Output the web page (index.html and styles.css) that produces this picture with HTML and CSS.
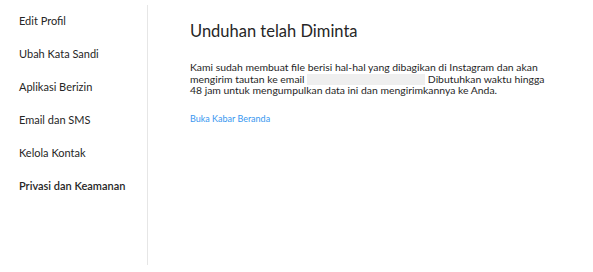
FILE: index.html
```html
<!DOCTYPE html>
<html lang="id">
<head>
    <meta charset="UTF-8">
    <meta name="viewport" content="width=device-width, initial-scale=1.0">
    <title>Privasi dan Keamanan</title>
    <link rel="stylesheet" href="styles.css">
</head>
<body>
    <div class="page">
        <ul class="side-nav">
            <li><a href="#">Edit Profil</a></li>
            <li><a href="#">Ubah Kata Sandi</a></li>
            <li><a href="#">Aplikasi Berizin</a></li>
            <li><a href="#">Email dan SMS</a></li>
            <li><a href="#">Kelola Kontak</a></li>
            <li><a href="#" class="active">Privasi dan Keamanan</a></li>
        </ul>

        <div class="content">
            <h1>Unduhan telah Diminta</h1>
            <p class="message">
                Kami sudah membuat file berisi hal-hal yang dibagikan di Instagram dan akan
                mengirim tautan ke email <span class="hidden-email"></span> Dibutuhkan waktu hingga
                48 jam untuk mengumpulkan data ini dan mengirimkannya ke Anda.
            </p>
            <a href="#" class="feed-link">Buka Kabar Beranda</a>
        </div>
    </div>
</body>
</html>
```

FILE: styles.css
```css
body {
    margin: 0;
    padding: 0;
    background-color: #fff;
    font-family: Lato, "Open Sans", Arial, sans-serif;
    color: #262626;
}
.page {
    display: flex;
    padding-top: 5px;
    height: 260px;
}
.side-nav {
    list-style: none;
    margin: 0;
    padding: 7px 0 0 0;
    width: 147px;
    border-right: 1px solid #e6e6e6;
}
.side-nav li {
    height: 33px;
}
.side-nav a {
    display: block;
    padding-left: 19px;
    font-size: 11px;
    line-height: 18px;
    color: #262626;
    text-decoration: none;
}
.side-nav a.active {
    font-weight: 600;
}
.content {
    padding: 16px 0 0 42px;
}
h1 {
    margin: 0;
    font-size: 16.5px;
    font-weight: 400;
    line-height: 21px;
}
.message {
    margin: 20px 0 0;
    font-size: 10.4px;
    line-height: 11.7px;
    width: 358px;
}
.hidden-email {
    display: inline-block;
    width: 118px;
    height: 11px;
    vertical-align: -2px;
    background-color: #efefef;
}
.feed-link {
    display: inline-block;
    margin-top: 16px;
    font-size: 9px;
    color: #3897f0;
    text-decoration: none;
}
```
